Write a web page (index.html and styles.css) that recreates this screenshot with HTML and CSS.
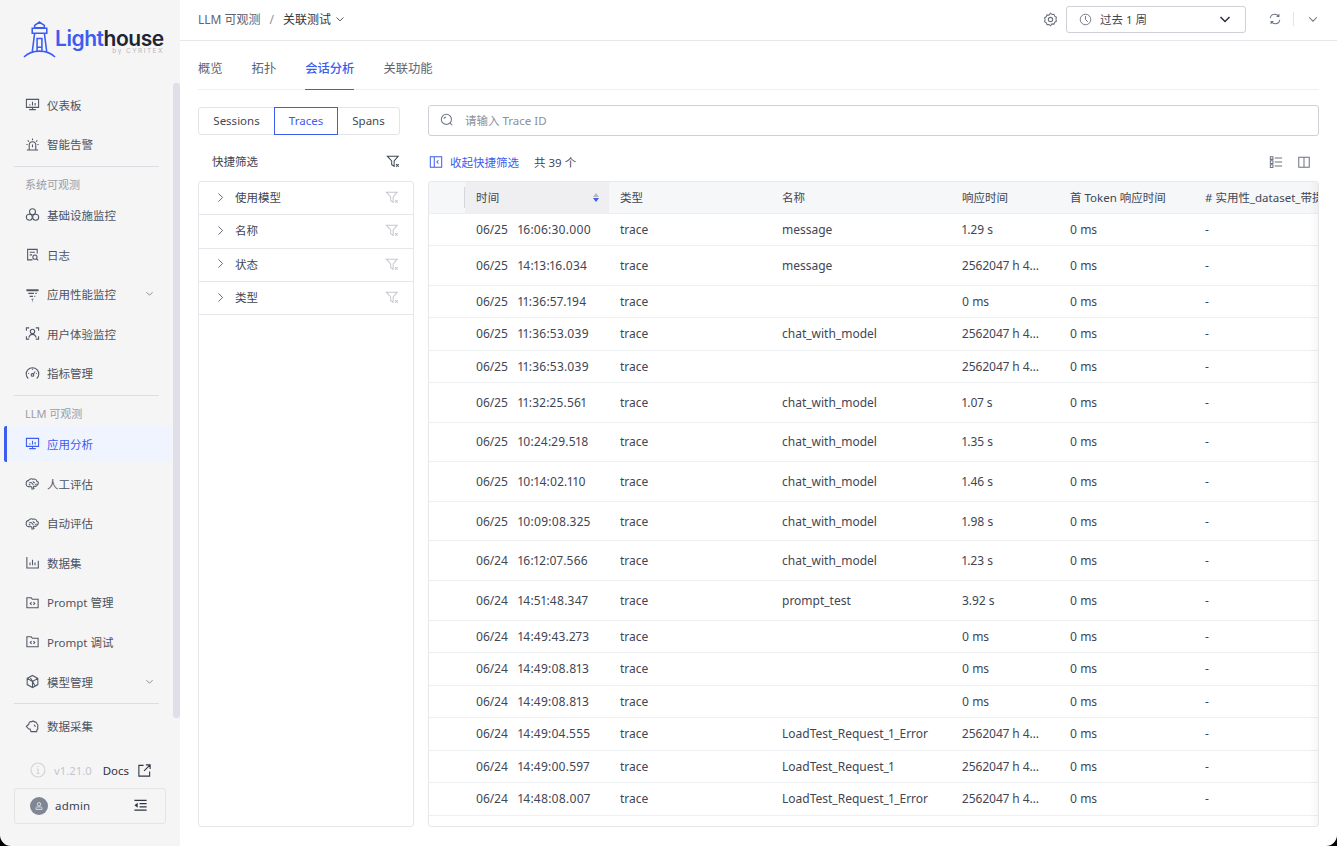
FILE: index.html
```html
<!DOCTYPE html>
<html lang="zh-CN">
<head>
    <meta charset="UTF-8">
    <title>关联测试</title>
    <link rel="stylesheet" href="styles.css">
</head>
<body>
    <!-- 图标 -->
    <svg class="sprite" xmlns="http://www.w3.org/2000/svg">
        <symbol id="i-monitor" viewBox="0 0 16 16"><path d="M1.500 2.500h13v8.600h-13zM8 11.100v2.400M4.500 13.500h7M5.200 9V7.600M8 9V5M10.800 9V6.400"/></symbol>
        <symbol id="i-alarm" viewBox="0 0 16 16"><path d="M4.500 13.500V8.600a3.500 3.500 0 0 1 7 0v4.900M2 13.800h12M8 1.500v2M2.800 3.600l1.400 1.300M13.200 3.600l-1.400 1.300M1.500 8h1.300M13.200 8h1.300M8 8v3"/></symbol>
        <symbol id="i-cells" viewBox="0 0 16 16"><circle cx="8" cy="5" r="3.200"/><circle cx="4.600" cy="10.900" r="3.200"/><circle cx="11.400" cy="10.900" r="3.200"/></symbol>
        <symbol id="i-log" viewBox="0 0 16 16"><path d="M13 7V2.500H2.800v11.200H8M5 5.600h5.500M5 8.400h2.500"/><circle cx="10.600" cy="10.800" r="2.200"/><path d="M12.200 12.400l1.800 1.800"/></symbol>
        <symbol id="i-apm" viewBox="0 0 16 16"><path d="M1.500 3h13M1.500 4h13M3.500 6.800h6M11 6.800h1.500M5 10h3.500M10 10h1M7 13h2M7.500 15h1"/></symbol>
        <symbol id="i-scan" viewBox="0 0 16 16"><path d="M1.500 5V2h3M11.500 2h3v3M14.500 11v3h-3M4.500 14h-3v-3"/><circle cx="8" cy="5.800" r="2.300"/><path d="M4 12.500c.6-2.400 2.200-3.600 4-3.600s3.400 1.200 4 3.600"/></symbol>
        <symbol id="i-gauge" viewBox="0 0 16 16"><path d="M3.500 13.500a6.700 6.700 0 1 1 9 0M8 3v1M3.400 8h1M11.600 8h1"/><circle cx="8" cy="9.500" r="1.400"/><path d="M8.900 8.500l2-2.600"/></symbol>
        <symbol id="i-brain" viewBox="0 0 16 16"><path d="M4.200 11.300C2 11.500.7 9.800 1.400 8 .7 6.300 2.300 4.700 3.800 5 4.300 3.200 7 2.500 8.500 3.500c2-.8 4 .4 4 2 1.800.3 2.500 2.800.8 3.800-.4 1.500-2.400 2.100-3.800 1.500l-.5 1.200.6 1.500-2.100.5-.3-2.500C5.800 11.200 5 11.600 4.200 11.300z"/><path d="M4.500 7.500c1-.7 2-.7 3 0M8.500 5.800c.3 1 1.300 1.600 2.300 1.300M7.500 7.500c.2 1 .8 1.500 1.700 1.600M4 9c.8 0 1.500.4 1.800 1M11 9.300c.5-.2 1-.5 1.300-1"/></symbol>
        <symbol id="i-chart" viewBox="0 0 16 16"><path d="M2 2v11.800h12.200V6M5.300 11V8M8 11V5M10.700 11V8"/></symbol>
        <symbol id="i-prompt" viewBox="0 0 16 16"><path d="M2 3h4.600l1.300 1.600H14v9H2zM7 7.600L5.600 9 7 10.400M9 7.600l1.400 1.400L9 10.400"/></symbol>
        <symbol id="i-cube" viewBox="0 0 16 16"><path d="M8 1.500l5.700 3.200v6.600L8 14.500l-5.700-3.200V4.700zM8 8l5.700-3.300M8 8L2.300 4.700M8 8v6.500M5 3l3 5M11 13l-3-5"/></symbol>
        <symbol id="i-puzzle" viewBox="0 0 16 16"><path d="M1.500 8L4.200 5.300C3.900 3.600 5.400 2.300 7 3c.8-1 2.400-1 3.100.1 1.500-.3 2.700.8 2.600 2.100 1.400.6 1.500 2.300.7 3.100.5 1.100.2 3-.9 3.700V13.500H6.400l-1-2.800H4z"/><path d="M9.500 6.500c1 .2 1.500 1 1.300 2"/></symbol>
        <symbol id="i-chevron" viewBox="0 0 16 16"><path d="M3.500 6L8 10.500 12.500 6"/></symbol>
        <symbol id="i-right" viewBox="0 0 16 16"><path d="M5 2l6 6-6 6"/></symbol>
        <symbol id="i-info" viewBox="0 0 16 16"><circle cx="8" cy="8" r="7"/><path d="M8 7v4.500M6.800 7H8M6.500 11.500h3M8 4v1"/></symbol>
        <symbol id="i-open" viewBox="0 0 16 16"><path d="M7 2.500H2v11.500h11.500V9M9.500 2H14v4.500M14 2L7.500 8.500"/></symbol>
        <symbol id="i-user" viewBox="0 0 16 16"><circle cx="8" cy="5.700" r="2.300"/><path d="M4 12.500V11c0-1 1-1.800 2-1.800h4c1 0 2 .8 2 1.800v1.500z"/></symbol>
        <symbol id="i-fold" viewBox="0 0 16 16"><path d="M1.500 2.500h13M7 6h7.500M7 9.500h7.500M1.500 13h13"/><path class="solid" d="M5 5v5.500L1.500 7.800z"/></symbol>
        <symbol id="i-gear" viewBox="0 0 16 16"><path d="M8 1.300l1.600 1.400 2.100-.2.800 2 1.800 1.100-.5 2.100.5 2.100-1.800 1.100-.8 2-2.100-.2L8 14.700l-1.600-1.400-2.100.2-.8-2-1.800-1.100.5-2.100-.5-2.100 1.800-1.100.8-2 2.100.2z"/><circle cx="8" cy="8" r="2.300"/></symbol>
        <symbol id="i-clock" viewBox="0 0 16 16"><circle cx="8" cy="8" r="6.500"/><path d="M8 3.800V8l2.800 2.800"/></symbol>
        <symbol id="i-refresh" viewBox="0 0 16 16"><path d="M2.500 7c.4-2.600 2.700-4.300 5.300-4.300 1.800 0 3.200.7 4.200 2M13.500 9c-.4 2.600-2.700 4.300-5.300 4.300-1.800 0-3.200-.7-4.200-2M12.500 2.300v2.800H9.800M3.500 13.700v-2.800h2.700"/></symbol>
        <symbol id="i-search" viewBox="0 0 16 16"><circle cx="7.300" cy="7.300" r="5.800"/><path d="M11.500 11.500l2.500 2.500M4.300 6.800c.3-1.300 1.300-2.200 2.700-2.300"/></symbol>
        <symbol id="i-filter" viewBox="0 0 16 16"><path d="M1.500 2.500h12.500L9.300 8v6L6.500 12.300V8zM11.500 11.500l3 3M14.500 11.500l-3 3"/></symbol>
        <symbol id="i-collapse" viewBox="0 0 16 16"><path d="M1.500 2h13v12h-13zM6 2v12M10.800 6L9 8l1.800 2"/></symbol>
        <symbol id="i-list" viewBox="0 0 16 16"><path d="M1.500 2h3v3h-3zM1.500 6.600h3v3h-3zM1.500 11.200h3v3h-3zM6.500 3.500h8.500M6.500 8h8.500M6.500 12.700h8.500"/></symbol>
        <symbol id="i-columns" viewBox="0 0 16 16"><path d="M2 2.500h12v11.500H2zM8 2.500V14"/></symbol>
    </svg>

    <div class="app">
        <!-- 左侧导航 -->
        <aside class="sidebar">
            <div class="logo">
                <svg class="logo-mark" viewBox="0 0 34 38">
                    <path d="M17 1l5 3.500V7H12V4.500zM9.500 7.500h15v5h-15zM12 12.500L9.500 32M22 12.500l2.500 19.500M14.500 32v-5h5v5M14.500 22v-4h5v4M14.500 27v-5M19.500 27v-5M1 37c5-5 11-6 16-6s11 1 16 6"/>
                </svg>
                <div class="logo-text">
                    <div class="logo-name"><span class="logo-blue">Light</span>house</div>
                    <div class="logo-by">by CYRITEX</div>
                </div>
            </div>

            <nav class="nav">
                <a class="nav-item"><svg class="icon"><use href="#i-monitor"/></svg>仪表板</a>
                <a class="nav-item"><svg class="icon"><use href="#i-alarm"/></svg>智能告警</a>
                <div class="nav-divider"></div>
                <div class="nav-label">系统可观测</div>
                <a class="nav-item"><svg class="icon"><use href="#i-cells"/></svg>基础设施监控</a>
                <a class="nav-item"><svg class="icon"><use href="#i-log"/></svg>日志</a>
                <a class="nav-item"><svg class="icon"><use href="#i-apm"/></svg>应用性能监控<svg class="nav-arrow"><use href="#i-chevron"/></svg></a>
                <a class="nav-item"><svg class="icon"><use href="#i-scan"/></svg>用户体验监控</a>
                <a class="nav-item"><svg class="icon"><use href="#i-gauge"/></svg>指标管理</a>
                <div class="nav-divider"></div>
                <div class="nav-label">LLM 可观测</div>
                <a class="nav-item active"><svg class="icon"><use href="#i-monitor"/></svg>应用分析</a>
                <a class="nav-item"><svg class="icon"><use href="#i-brain"/></svg>人工评估</a>
                <a class="nav-item"><svg class="icon"><use href="#i-brain"/></svg>自动评估</a>
                <a class="nav-item"><svg class="icon"><use href="#i-chart"/></svg>数据集</a>
                <a class="nav-item"><svg class="icon"><use href="#i-prompt"/></svg>Prompt 管理</a>
                <a class="nav-item"><svg class="icon"><use href="#i-prompt"/></svg>Prompt 调试</a>
                <a class="nav-item"><svg class="icon"><use href="#i-cube"/></svg>模型管理<svg class="nav-arrow"><use href="#i-chevron"/></svg></a>
                <div class="nav-divider nav-divider-last"></div>
                <a class="nav-item"><svg class="icon"><use href="#i-puzzle"/></svg>数据采集</a>
            </nav>

            <div class="version-row">
                <svg class="version-icon"><use href="#i-info"/></svg>
                <span class="version">v1.21.0</span>
                <span class="docs">Docs</span>
                <svg class="docs-icon"><use href="#i-open"/></svg>
            </div>
            <div class="user-box">
                <span class="avatar"><svg><use href="#i-user"/></svg></span>
                <span class="user-name">admin</span>
                <svg class="fold-icon"><use href="#i-fold"/></svg>
            </div>
            <div class="side-scroll"></div>
        </aside>

        <main class="main">
            <!-- 顶部栏 -->
            <header class="topbar">
                <div class="crumbs">
                    <span class="crumb-parent">LLM 可观测</span>
                    <span class="crumb-sep">/</span>
                    <span class="crumb-current">关联测试</span>
                    <svg class="crumb-arrow"><use href="#i-chevron"/></svg>
                </div>
                <div class="top-actions">
                    <svg class="gear"><use href="#i-gear"/></svg>
                    <div class="time-select">
                        <svg class="clock"><use href="#i-clock"/></svg>
                        <span class="time-text">过去 1 周</span>
                        <svg class="time-arrow"><use href="#i-chevron"/></svg>
                    </div>
                    <svg class="refresh"><use href="#i-refresh"/></svg>
                    <span class="top-sep"></span>
                    <svg class="top-arrow"><use href="#i-chevron"/></svg>
                </div>
            </header>

            <div class="page">
                <div class="tabs">
                    <a class="tab">概览</a>
                    <a class="tab">拓扑</a>
                    <a class="tab current">会话分析</a>
                    <a class="tab">关联功能</a>
                </div>

                <div class="content">
                    <div class="segments">
                        <span class="seg seg-sessions">Sessions</span>
                        <span class="seg seg-traces">Traces</span>
                        <span class="seg seg-spans">Spans</span>
                    </div>
                    <div class="search">
                        <svg class="search-icon"><use href="#i-search"/></svg>
                        <span class="search-text">请输入 Trace ID</span>
                    </div>

                    <div class="quick-head">
                        <span>快捷筛选</span>
                        <svg class="filter-dark"><use href="#i-filter"/></svg>
                    </div>
                    <div class="table-tools">
                        <svg class="collapse-icon"><use href="#i-collapse"/></svg>
                        <span class="collapse-text">收起快捷筛选</span>
                        <span class="total">共 39 个</span>
                        <svg class="tool-icon tool-list"><use href="#i-list"/></svg>
                        <svg class="tool-icon"><use href="#i-columns"/></svg>
                    </div>

                    <!-- 快捷筛选 -->
                    <div class="filter-panel">
                        <div class="filter-row"><svg class="filter-arrow"><use href="#i-right"/></svg><span>使用模型</span><svg class="filter-light"><use href="#i-filter"/></svg></div>
                        <div class="filter-row"><svg class="filter-arrow"><use href="#i-right"/></svg><span>名称</span><svg class="filter-light"><use href="#i-filter"/></svg></div>
                        <div class="filter-row"><svg class="filter-arrow"><use href="#i-right"/></svg><span>状态</span><svg class="filter-light"><use href="#i-filter"/></svg></div>
                        <div class="filter-row"><svg class="filter-arrow"><use href="#i-right"/></svg><span>类型</span><svg class="filter-light"><use href="#i-filter"/></svg></div>
                    </div>

                    <!-- 列表 -->
                    <div class="table">
                        <div class="row head">
                            <div class="cell cell-check"></div>
                            <div class="cell cell-time">时间<span class="sort"><i class="sort-up"></i><i class="sort-down"></i></span></div>
                            <div class="cell">类型</div>
                            <div class="cell">名称</div>
                            <div class="cell">响应时间</div>
                            <div class="cell">首 Token 响应时间</div>
                            <div class="cell"># 实用性_dataset_带提示词</div>
                        </div>
                        <div class="row"><div class="cell"></div><div class="cell"><span class="date">06/25</span>16:06:30.000</div><div class="cell">trace</div><div class="cell">message</div><div class="cell">1.29 s</div><div class="cell">0 ms</div><div class="cell">-</div></div>
                        <div class="row tall"><div class="cell"></div><div class="cell"><span class="date">06/25</span>14:13:16.034</div><div class="cell">trace</div><div class="cell">message</div><div class="cell">2562047 h 47 min 16 s</div><div class="cell">0 ms</div><div class="cell">-</div></div>
                        <div class="row"><div class="cell"></div><div class="cell"><span class="date">06/25</span>11:36:57.194</div><div class="cell">trace</div><div class="cell"></div><div class="cell">0 ms</div><div class="cell">0 ms</div><div class="cell">-</div></div>
                        <div class="row"><div class="cell"></div><div class="cell"><span class="date">06/25</span>11:36:53.039</div><div class="cell">trace</div><div class="cell">chat_with_model</div><div class="cell">2562047 h 47 min 16 s</div><div class="cell">0 ms</div><div class="cell">-</div></div>
                        <div class="row"><div class="cell"></div><div class="cell"><span class="date">06/25</span>11:36:53.039</div><div class="cell">trace</div><div class="cell"></div><div class="cell">2562047 h 47 min 16 s</div><div class="cell">0 ms</div><div class="cell">-</div></div>
                        <div class="row tall"><div class="cell"></div><div class="cell"><span class="date">06/25</span>11:32:25.561</div><div class="cell">trace</div><div class="cell">chat_with_model</div><div class="cell">1.07 s</div><div class="cell">0 ms</div><div class="cell">-</div></div>
                        <div class="row tall"><div class="cell"></div><div class="cell"><span class="date">06/25</span>10:24:29.518</div><div class="cell">trace</div><div class="cell">chat_with_model</div><div class="cell">1.35 s</div><div class="cell">0 ms</div><div class="cell">-</div></div>
                        <div class="row tall"><div class="cell"></div><div class="cell"><span class="date">06/25</span>10:14:02.110</div><div class="cell">trace</div><div class="cell">chat_with_model</div><div class="cell">1.46 s</div><div class="cell">0 ms</div><div class="cell">-</div></div>
                        <div class="row tall"><div class="cell"></div><div class="cell"><span class="date">06/25</span>10:09:08.325</div><div class="cell">trace</div><div class="cell">chat_with_model</div><div class="cell">1.98 s</div><div class="cell">0 ms</div><div class="cell">-</div></div>
                        <div class="row tall"><div class="cell"></div><div class="cell"><span class="date">06/24</span>16:12:07.566</div><div class="cell">trace</div><div class="cell">chat_with_model</div><div class="cell">1.23 s</div><div class="cell">0 ms</div><div class="cell">-</div></div>
                        <div class="row tall"><div class="cell"></div><div class="cell"><span class="date">06/24</span>14:51:48.347</div><div class="cell">trace</div><div class="cell">prompt_test</div><div class="cell">3.92 s</div><div class="cell">0 ms</div><div class="cell">-</div></div>
                        <div class="row"><div class="cell"></div><div class="cell"><span class="date">06/24</span>14:49:43.273</div><div class="cell">trace</div><div class="cell"></div><div class="cell">0 ms</div><div class="cell">0 ms</div><div class="cell">-</div></div>
                        <div class="row"><div class="cell"></div><div class="cell"><span class="date">06/24</span>14:49:08.813</div><div class="cell">trace</div><div class="cell"></div><div class="cell">0 ms</div><div class="cell">0 ms</div><div class="cell">-</div></div>
                        <div class="row"><div class="cell"></div><div class="cell"><span class="date">06/24</span>14:49:08.813</div><div class="cell">trace</div><div class="cell"></div><div class="cell">0 ms</div><div class="cell">0 ms</div><div class="cell">-</div></div>
                        <div class="row"><div class="cell"></div><div class="cell"><span class="date">06/24</span>14:49:04.555</div><div class="cell">trace</div><div class="cell">LoadTest_Request_1_Error</div><div class="cell">2562047 h 47 min 16 s</div><div class="cell">0 ms</div><div class="cell">-</div></div>
                        <div class="row"><div class="cell"></div><div class="cell"><span class="date">06/24</span>14:49:00.597</div><div class="cell">trace</div><div class="cell">LoadTest_Request_1</div><div class="cell">2562047 h 47 min 16 s</div><div class="cell">0 ms</div><div class="cell">-</div></div>
                        <div class="row"><div class="cell"></div><div class="cell"><span class="date">06/24</span>14:48:08.007</div><div class="cell">trace</div><div class="cell">LoadTest_Request_1_Error</div><div class="cell">2562047 h 47 min 16 s</div><div class="cell">0 ms</div><div class="cell">-</div></div>
                    </div>
                </div>
            </div>
        </main>
    </div>
</body>
</html>
```

FILE: styles.css
```css
* {
    margin: 0;
    padding: 0;
    box-sizing: border-box;
}

body {
    font-family: "Noto Sans", "Noto Sans CJK SC", sans-serif;
    font-size: 11.5px;
    background: #000;
    color: #3f4654;
    overflow: hidden;
}

svg {
    fill: none;
    stroke: currentColor;
    stroke-width: 1.15;
    display: block;
    flex-shrink: 0;
}

.sprite {
    width: 0;
    height: 0;
    position: absolute;
}

.solid {
    fill: currentColor;
    stroke: none;
}

.app {
    display: flex;
    height: 846px;
}

/* 左侧导航 */
.sidebar {
    position: relative;
    width: 180px;
    flex-shrink: 0;
    display: flex;
    flex-direction: column;
    background: #f5f5f6;
    border-bottom-left-radius: 11px;
}

.logo {
    height: 85px;
    padding: 21px 0 0 23px;
    display: flex;
    align-items: flex-start;
}

.logo-mark {
    width: 33px;
    height: 37px;
    color: #3d5cf0;
    stroke-width: 1.6;
}

.logo-text {
    margin-left: -1px;
    margin-top: 5px;
}

.logo-name {
    font-family: "Inter", sans-serif;
    font-size: 21px;
    font-weight: 600;
    line-height: 25px;
    letter-spacing: -0.45px;
    color: #1f2433;
}

.logo-blue {
    color: #3d5cf0;
}

.logo-by {
    font-family: "Inter", sans-serif;
    font-size: 6.5px;
    line-height: 6px;
    margin-top: -3px;
    letter-spacing: 1.45px;
    color: #b4b6be;
    text-align: right;
}

.nav {
    display: flex;
    flex-direction: column;
}

.nav-item {
    position: relative;
    display: flex;
    align-items: center;
    height: 39.6px;
    padding-left: 25px;
    color: #4c5361;
    isolation: isolate;
}

.nav-item .icon {
    width: 15px;
    height: 15px;
    margin-right: 7px;
    color: #525966;
}

.nav-arrow {
    position: absolute;
    left: 144px;
    top: 14px;
    width: 11px;
    height: 11px;
    color: #6b7280;
}

.nav-item.active {
    color: #3d5cf0;
}

.nav-item.active .icon {
    color: #3d5cf0;
}

.nav-item.active::before {
    content: "";
    position: absolute;
    left: 4px;
    right: 8px;
    top: 1.800px;
    bottom: 1.800px;
    background: #f0f4ff;
    border-left: 3px solid #3d5cf0;
    border-radius: 2px;
    z-index: -1;
}

.nav-divider {
    height: 1px;
    margin: 2px 21px 0 14px;
    background: #dcdce2;
}

.nav-divider-last {
    margin-bottom: 2px;
}

.nav-label {
    height: 28px;
    line-height: 35px;
    padding-left: 25px;
    font-size: 11px;
    color: #9a9ca5;
}

.version-row {
    display: flex;
    align-items: center;
    margin-top: auto;
    height: 20px;
    padding-left: 30px;
}

.version-icon {
    width: 16px;
    height: 16px;
    color: #d2d3d7;
}

.version {
    margin-left: 8px;
    color: #c6c7cc;
    font-size: 11.3px;
}

.docs {
    margin-left: 11px;
    color: #2e3442;
}

.docs-icon {
    width: 15px;
    height: 15px;
    margin-left: 8px;
    color: #2e3442;
}

.user-box {
    display: flex;
    align-items: center;
    height: 36px;
    margin: 8px 14px 22px;
    padding: 0 17px 1px 15px;
    border: 1px solid #e3e3e8;
    border-radius: 3px;
}

.avatar {
    width: 18px;
    height: 18px;
    border-radius: 50%;
    background: #7f8794;
    color: #e9eaee;
    display: flex;
    align-items: center;
    justify-content: center;
}

.avatar svg {
    width: 12px;
    height: 12px;
}

.user-name {
    margin-left: 7px;
    color: #3b4250;
    letter-spacing: 0.2px;
}

.fold-icon {
    width: 15px;
    height: 15px;
    margin-left: auto;
    color: #2e3442;
    stroke-width: 1.4;
}

.side-scroll {
    position: absolute;
    left: 173px;
    top: 83px;
    width: 7px;
    height: 635px;
    border-radius: 3px;
    background: #dfdfe9;
}

/* 右侧内容 */
.main {
    flex: 1;
    min-width: 0;
    background: #fff;
    border-bottom-right-radius: 11px;
}

.topbar {
    height: 41px;
    display: flex;
    align-items: center;
    justify-content: space-between;
    padding: 0 18px 2px;
    border-bottom: 1px solid #e6e7ea;
}

.crumbs {
    display: flex;
    align-items: center;
    font-size: 12px;
}

.crumb-parent {
    color: #5d6472;
}

.crumb-sep {
    margin: 0 9px;
    color: #8c909a;
}

.crumb-current {
    color: #2f3543;
}

.crumb-arrow {
    width: 12px;
    height: 12px;
    margin-left: 3px;
    color: #2f3543;
}

.top-actions {
    display: flex;
    align-items: center;
    margin-right: 1px;
}

.gear {
    width: 15px;
    height: 15px;
    margin-right: 8px;
    color: #6b7280;
}

.time-select {
    display: flex;
    align-items: center;
    width: 180px;
    height: 27px;
    padding: 0 12px 0 12px;
    border: 1px solid #cfd1d6;
    border-radius: 3px;
}

.clock {
    width: 13px;
    height: 13px;
    color: #6b7280;
}

.time-text {
    margin-left: 8px;
    color: #3f4654;
}

.time-arrow {
    width: 16px;
    height: 16px;
    margin-left: auto;
    color: #2a2f3b;
    stroke-width: 1.5;
}

.refresh {
    width: 14px;
    height: 14px;
    margin-left: 22px;
    color: #6b7280;
}

.top-sep {
    width: 1px;
    height: 14px;
    margin: 0 12px 0 11px;
    background: #e3e4e8;
}

.top-arrow {
    width: 14px;
    height: 14px;
    margin-right: -2px;
    color: #6b7280;
}

.page {
    padding: 9px 18px 0;
}

.tabs {
    display: flex;
    gap: 29px;
    height: 40px;
    border-bottom: 1px solid #eeeff1;
}

.tab {
    height: 40px;
    line-height: 38px;
    font-size: 12.3px;
    color: #5d6472;
}

.tab.current {
    color: #3d5cf0;
    font-weight: 500;
    border-bottom: 1px solid #3d5cf0;
}

.content {
    display: grid;
    grid-template-columns: 216px 891px;
    grid-template-rows: 31px 45px 646px;
    column-gap: 14px;
    margin-top: 15px;
}

.segments {
    display: flex;
    align-self: center;
    width: 202px;
    height: 28px;
    border: 1px solid #e3e4e8;
    border-radius: 3px;
}

.seg {
    display: flex;
    align-items: center;
    justify-content: center;
    color: #3f4654;
}

.seg-sessions {
    width: 75px;
}

.seg-traces {
    width: 64px;
    margin: -1px 0;
    border: 1px solid #3d5cf0;
    color: #3d5cf0;
}

.seg-spans {
    flex: 1;
}

.search {
    display: flex;
    align-items: center;
    border: 1px solid #cfd1d6;
    border-radius: 3px;
    padding: 0 0 1px 11px;
}

.search-icon {
    width: 14px;
    height: 14px;
    color: #6b7280;
}

.search-text {
    margin-left: 11px;
    color: #8c909a;
}

.quick-head {
    display: flex;
    align-items: center;
    justify-content: space-between;
    padding: 5px 14px 0;
    color: #3f4654;
}

.filter-dark {
    width: 14px;
    height: 14px;
    color: #3f4654;
}

.table-tools {
    display: flex;
    align-items: center;
    padding: 6px 8px 0 1px;
}

.collapse-icon {
    width: 14px;
    height: 14px;
    color: #3d5cf0;
}

.collapse-text {
    margin-left: 7px;
    color: #3d5cf0;
}

.total {
    margin-left: 15px;
    color: #3f4654;
}

.tool-icon {
    width: 14px;
    height: 14px;
    color: #6b7280;
    margin-left: 14px;
}

.tool-list {
    margin-left: auto;
}

.filter-panel {
    border: 1px solid #e6e7ea;
    border-radius: 3px;
}

.filter-row {
    display: flex;
    align-items: center;
    height: 33.3px;
    padding: 0 14px 2px 16px;
    border-bottom: 1px solid #e6e7ea;
}

.filter-arrow {
    width: 11px;
    height: 11px;
    margin-right: 9px;
    color: #3f4654;
}

.filter-light {
    width: 14px;
    height: 14px;
    margin-left: auto;
    color: #c6c8ce;
}

.table {
    position: relative;
    border: 1px solid #e6e7ea;
    border-radius: 3px;
    overflow: hidden;
}

/* 右侧固定列阴影 */
.table::after {
    content: "";
    position: absolute;
    top: 0;
    right: 0;
    bottom: 0;
    width: 8px;
    background: linear-gradient(to right, rgba(0,0,0,0), rgba(0,0,0,0.035));
}

.row {
    display: grid;
    grid-template-columns: 36px 144px 162px 180px 108px 135px 125px;
    height: 32.5px;
    border-bottom: 1px solid #eeeff1;
    align-items: center;
    font-size: 12px;
    font-variant-numeric: proportional-nums;
}

.row.tall {
    height: 39.6px;
}

.row.head {
    height: 31.5px;
    padding-bottom: 1px;
    background: #f6f7f9;
    border-bottom: 1px solid #eceef1;
    color: #3f4654;
    font-size: 11.5px;
}

.cell {
    padding: 0 17px 0 11px;
    white-space: nowrap;
    overflow: hidden;
    text-overflow: ellipsis;
}

.row .cell:nth-child(2) {
    letter-spacing: 0.2px;
}

.head .cell:last-child {
    text-overflow: clip;
    padding-right: 0;
}

.cell-check {
    height: 21px;
    padding: 0;
    border-right: 1px solid #d4d6da;
}

.cell-time {
    display: flex;
    align-items: center;
    justify-content: space-between;
    height: 31px;
    margin-bottom: -1px;
    padding: 0 11px 1px;
    background: #efeff1;
}

.sort {
    display: flex;
    flex-direction: column;
    gap: 1px;
    margin-right: -1px;
}

.sort i {
    display: block;
    width: 0;
    height: 0;
    border-left: 3px solid transparent;
    border-right: 3px solid transparent;
}

.sort-up {
    border-bottom: 4px solid #b4b6bc;
}

.sort-down {
    border-top: 4px solid #3d5cf0;
}

.date {
    margin-right: 10px;
    letter-spacing: 0;
}
```
